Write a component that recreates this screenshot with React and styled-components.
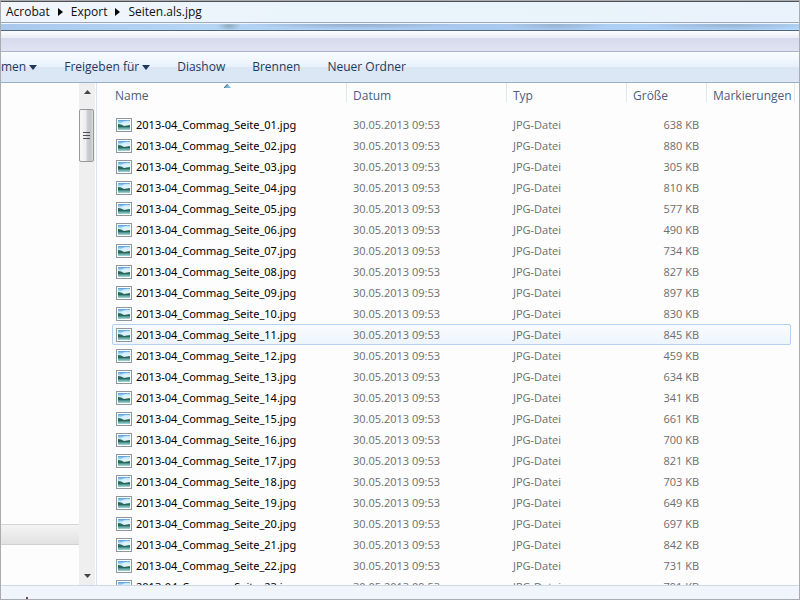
import styled, { createGlobalStyle, css } from 'styled-components';

const GlobalStyle = createGlobalStyle`
	* {
		box-sizing: border-box;
	}
	body {
		margin: 0;
		font-family: 'Open Sans', 'Noto Sans', sans-serif;
		font-size: 12px;
	}
`;

const Window = styled.div`
	display: flex;
	flex-direction: column;
	height: 100vh;
	overflow: hidden;
	background: #fdfdfd;
	border: 1px solid #a9abae;
`;

const AddressBar = styled.nav`
	display: flex;
	flex: none;
	align-items: center;
	gap: 8px;
	height: 22px;
	padding: 0 5px;
	background: linear-gradient(90deg, #f2f6fc 0%, #e9f4fb 40%, #eaf3fb 100%);
	border-top: 1px solid #4e5257;
	border-bottom: 1px solid #9aa9bb;
`;

const Crumb = styled.a`
	color: #101010;
	line-height: 20px;
	text-decoration: none;
`;

const GlassStrip = styled.div`
	flex: none;
	height: 8px;
	background: radial-gradient(ellipse 12px 5px at 228px 2px, #8facbf, transparent),
		radial-gradient(ellipse 110px 5px at 355px 0, #92abc9, transparent),
		radial-gradient(ellipse 50px 6px at 555px 1px, #98b4d2, transparent),
		radial-gradient(ellipse 90px 6px at 730px 1px, #98b4d4, transparent),
		linear-gradient(90deg, #aac8ec, #b5d5f5 25%, #a9c8ee 60%, #b5d8fb);
	border-top: 1px solid #f0f6fc;
	border-bottom: 1px solid #4c6683;
`;

const MenuStrip = styled.div`
	flex: none;
	height: 21px;
	background: linear-gradient(#fdfdff 0, #eaedf7 7px, #d5daec 7px, #e1e3f3 20px);
	border-bottom: 1px solid #a9b2cb;
`;

const Toolbar = styled.div`
	display: flex;
	flex: none;
	align-items: center;
	gap: 27px;
	height: 31px;
	background: linear-gradient(#fafdff 0, #e7f1fb 15px, #dbe6f4 15px, #dce7f5 30px);
	border-bottom: 1px solid #98aec9;
`;

const ToolButton = styled.button`
	display: flex;
	align-items: center;
	gap: 3px;
	padding: 0;
	background: none;
	border: 0;
	color: #1e395b;
	font: inherit;
	line-height: 20px;
	white-space: nowrap;
`;

const Content = styled.main`
	display: flex;
	flex: 1;
	min-height: 0;
`;

const NavPane = styled.aside`
	display: flex;
	flex-direction: column;
	flex: none;
	justify-content: flex-end;
	width: 78px;
	padding-bottom: 40px;
`;

const NavItem = styled.div`
	height: 21px;
	background: linear-gradient(#f4f4f4, #e2e2e2);
	border-top: 1px solid #d6d6d6;
	border-bottom: 1px solid #d0d0d0;
`;

const ScrollBar = styled.div`
	display: flex;
	flex-direction: column;
	flex: none;
	width: 16px;
	background: #efeff0;
`;

const ScrollButton = styled.button`
	display: flex;
	align-items: center;
	justify-content: center;
	height: 18px;
	padding: 0;
	background: none;
	border: 0;
`;

const Thumb = styled.div`
	display: flex;
	flex-direction: column;
	align-items: center;
	justify-content: center;
	gap: 2px;
	height: 53px;
	margin: 8px 1px auto 0;
	background: linear-gradient(90deg, #f7f7f7 0, #ededee 45%, #cfd0d3 55%, #c2c3c7 80%, #dddee0 100%);
	border: 1px solid #97989c;
	border-radius: 2px;
`;

const Grip = styled.span`
	width: 7px;
	height: 1px;
	background: #4e4f52;
`;

const ListPane = styled.section`
	flex: 1;
	min-width: 0;
	margin-left: 1px;
	padding: 0 8px 0 15px;
	overflow: hidden;
	border-left: 1px solid #d9e3f2;
`;

const FileTable = styled.table`
	width: 100%;
	table-layout: fixed;
	border-collapse: separate;
	border-spacing: 0;
`;

const Column = styled.col`
	width: ${({ $width }) => $width};
`;

const HeaderCell = styled.th`
	position: relative;
	height: 31px;
	padding: 3px 0 0 ${({ $first }) => ($first ? '3px' : '7px')};
	color: #4c607a;
	font-weight: 400;
	line-height: 20px;
	text-align: left;
	vertical-align: top;
	white-space: nowrap;

	&::after {
		position: absolute;
		top: 0;
		right: ${({ $last }) => ($last ? '-4px' : '-1px')};
		width: 1px;
		height: 19px;
		background: #dfe7f1;
		content: '';
	}
`;

const SortMark = styled.svg`
	position: absolute;
	top: 1px;
	left: 112px;
`;

const Row = styled.tr`
	height: 21px;
	${({ $active }) =>
		$active &&
		css`
			background: linear-gradient(#fafcff, #edf4fc);
			border-radius: 2px;
			outline: 1px solid #b5d1ee;
			outline-offset: -1px;
		`}
`;

const Cell = styled.td`
	height: 21px;
	padding: 0 7px;
	color: #6d6d6d;
	font-size: 11px;
	line-height: 20px;
	text-align: ${({ $right }) => ($right ? 'right' : 'left')};
	white-space: nowrap;
`;

const NameCell = styled(Cell)`
	padding: 0 4px;
	color: #000;
	font-family: 'Noto Sans', 'Open Sans', sans-serif;
`;

const FileName = styled.div`
	display: flex;
	align-items: center;
	gap: 4px;
`;

const StatusBar = styled.footer`
	flex: none;
	height: 14px;
	padding: 11px 0 0 25px;
	background: #f0f5fc;
	border-top: 1px solid #ccd8e5;
`;

const StatusMark = styled.div`
	width: 2px;
	height: 2px;
	background: #713f4b;
`;

const sizes = [
	638, 880, 305, 810, 577, 490, 734, 827, 897, 830, 845, 459,
	634, 341, 661, 700, 821, 703, 649, 697, 842, 731, 791,
];

const files = sizes.map((size, i) => ({
	name: `2013-04_Commag_Seite_${String(i + 1).padStart(2, '0')}.jpg`,
	date: '30.05.2013 09:53',
	type: 'JPG-Datei',
	size: `${size} KB`,
}));

function CrumbArrow() {
	return (
		<svg width="5" height="8" viewBox="0 0 5 8">
			<path d="M0 0L5 4L0 8Z" fill="#080808" />
		</svg>
	);
}

function DropArrow() {
	return (
		<svg width="8" height="5" viewBox="0 0 8 5">
			<path d="M0 0H8L4 5Z" fill="#1e395b" />
		</svg>
	);
}

function PictureIcon() {
	return (
		<svg width="16" height="14" viewBox="0 0 16 14">
			<defs>
				<linearGradient id="sky" x1="0" y1="0" x2="0" y2="1">
					<stop offset="0" stopColor="#4f9ce0" />
					<stop offset="0.5" stopColor="#c4e8fa" />
					<stop offset="1" stopColor="#e4f6fc" />
				</linearGradient>
				<linearGradient id="water" x1="0" y1="0" x2="0" y2="1">
					<stop offset="0" stopColor="#3c8580" />
					<stop offset="1" stopColor="#a8dbe0" />
				</linearGradient>
			</defs>
			<rect x="0.5" y="0.5" width="15" height="13" fill="#fff" stroke="#8e979f" />
			<rect x="2" y="2" width="12" height="7" fill="url(#sky)" />
			<path d="M5 5Q9 2 14 3V7H9Z" fill="#eaf8fe" opacity="0.7" />
			<rect x="2" y="9" width="12" height="3" fill="url(#water)" />
			<path d="M2 6Q5 6 8 8L14 7V9H2Z" fill="#2b6556" />
		</svg>
	);
}

export default function App() {
	return (
		<>
			<GlobalStyle />
			<Window>
				<AddressBar>
					<Crumb href="#acrobat">Acrobat</Crumb>
					<CrumbArrow />
					<Crumb href="#export">Export</Crumb>
					<CrumbArrow />
					<Crumb href="#seiten">Seiten.als.jpg</Crumb>
				</AddressBar>
				<GlassStrip />
				<MenuStrip />
				<Toolbar>
					<ToolButton>
						men <DropArrow />
					</ToolButton>
					<ToolButton>
						Freigeben für <DropArrow />
					</ToolButton>
					<ToolButton>Diashow</ToolButton>
					<ToolButton>Brennen</ToolButton>
					<ToolButton>Neuer Ordner</ToolButton>
				</Toolbar>
				<Content>
					<NavPane>
						<NavItem />
					</NavPane>
					<ScrollBar>
						<ScrollButton aria-label="Nach oben">
							<svg width="7" height="4" viewBox="0 0 7 4">
								<path d="M3.5 0L7 4H0Z" fill="#454545" />
							</svg>
						</ScrollButton>
						<Thumb>
							<Grip />
							<Grip />
							<Grip />
						</Thumb>
						<ScrollButton aria-label="Nach unten">
							<svg width="7" height="4" viewBox="0 0 7 4">
								<path d="M0 0H7L3.5 4Z" fill="#454545" />
							</svg>
						</ScrollButton>
					</ScrollBar>
					<ListPane>
						<FileTable>
							<colgroup>
								<Column $width="auto" />
								<Column $width="160px" />
								<Column $width="120px" />
								<Column $width="80px" />
								<Column $width="85px" />
							</colgroup>
							<thead>
								<tr>
									<HeaderCell $first>
										Name
										<SortMark width="7" height="4" viewBox="0 0 7 4">
											<path d="M3.5 0L7 4H0Z" fill="#79b5d3" />
											<path d="M3.5 0L0 4" stroke="#35637d" />
										</SortMark>
									</HeaderCell>
									<HeaderCell>Datum</HeaderCell>
									<HeaderCell>Typ</HeaderCell>
									<HeaderCell>Größe</HeaderCell>
									<HeaderCell $last>Markierungen</HeaderCell>
								</tr>
							</thead>
							<tbody>
								{files.map((file, i) => (
									<Row key={file.name} $active={i === 10}>
										<NameCell>
											<FileName>
												<PictureIcon />
												{file.name}
											</FileName>
										</NameCell>
										<Cell>{file.date}</Cell>
										<Cell>{file.type}</Cell>
										<Cell $right>{file.size}</Cell>
										<Cell />
									</Row>
								))}
							</tbody>
						</FileTable>
					</ListPane>
				</Content>
				<StatusBar>
					<StatusMark />
				</StatusBar>
			</Window>
		</>
	);
}
